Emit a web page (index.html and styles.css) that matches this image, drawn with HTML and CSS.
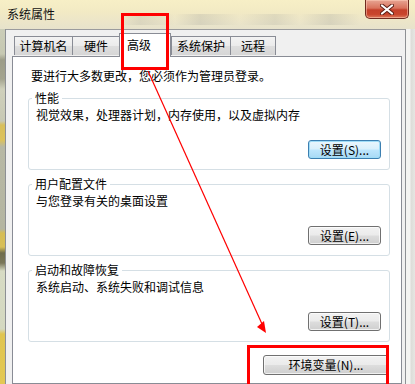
FILE: index.html
```html
<!DOCTYPE html>
<html lang="zh-CN">
<head>
<meta charset="utf-8">
<title>系统属性</title>
<link rel="stylesheet" href="styles.css">
</head>
<body>
<div class="window">
  <div class="titlebar">
    <span class="title">系统属性</span>
    <div class="close">
      <svg width="14" height="11" viewBox="0 0 14 11"><path d="M2 1.5 L12 9.5 M12 1.5 L2 9.5" stroke="#5a1d14" stroke-width="4" stroke-linecap="round"/><path d="M2 1.5 L12 9.5 M12 1.5 L2 9.5" stroke="#ffffff" stroke-width="2.2" stroke-linecap="round"/></svg>
    </div>
  </div>
  <div class="body">
    <div class="frame-left"></div>
    <div class="client">
      <div class="tabs">
        <div class="tab w1">计算机名</div>
        <div class="tab w2">硬件</div>
        <div class="tab selected">高级</div>
        <div class="tab w4">系统保护</div>
        <div class="tab w5">远程</div>
      </div>
      <div class="panel">
        <p class="intro">要进行大多数更改，您必须作为管理员登录。</p>
        <fieldset class="group">
          <legend>性能</legend>
          <p class="desc">视觉效果，处理器计划，内存使用，以及虚拟内存</p>
          <div class="actions"><button class="btn focused">设置(S)...</button></div>
        </fieldset>
        <fieldset class="group">
          <legend>用户配置文件</legend>
          <p class="desc">与您登录有关的桌面设置</p>
          <div class="actions"><button class="btn">设置(E)...</button></div>
        </fieldset>
        <fieldset class="group">
          <legend>启动和故障恢复</legend>
          <p class="desc">系统启动、系统失败和调试信息</p>
          <div class="actions"><button class="btn">设置(T)...</button></div>
        </fieldset>
        <div class="env-row"><button class="btn env">环境变量(N)...</button></div>
      </div>
    </div>
    <div class="frame-right"></div>
  </div>
  <svg class="annot" width="415" height="384" viewBox="0 0 415 384">
    <rect x="122.5" y="14.5" width="45" height="54" fill="none" stroke="#ff0000" stroke-width="3"/>
    <line x1="148" y1="71" x2="262" y2="324" stroke="#ff0000" stroke-width="1.2"/>
    <polygon points="257,327 264,321 266,333" fill="#ff0000"/>
    <rect x="248.5" y="346.5" width="139" height="60" fill="none" stroke="#ff0000" stroke-width="3"/>
  </svg>
</div>
</body>
</html>
```
FILE: styles.css
```css
* { box-sizing: border-box; }
html, body { margin: 0; padding: 0; }
body {
  width: 415px;
  height: 384px;
  overflow: hidden;
  font-family: "Noto Sans CJK SC", "Liberation Sans", sans-serif;
  font-size: 12px;
  color: #000;
}
.window {
  position: relative;
  width: 415px;
  height: 384px;
  overflow: hidden;
  display: flex;
  flex-direction: column;
  background: #e9e3c9;
}
.titlebar {
  height: 29px;
  flex: none;
  display: flex;
  justify-content: space-between;
  align-items: flex-start;
  background:
    linear-gradient(90deg, rgba(255,255,255,0) 0, rgba(255,255,255,0) 120px, rgba(170,170,160,0.25) 140px, rgba(255,255,255,0) 175px, rgba(170,170,160,0.3) 200px, rgba(255,255,255,0) 240px, rgba(170,170,160,0.25) 275px, rgba(255,255,255,0) 300px, rgba(170,170,160,0.3) 330px, rgba(255,255,255,0) 360px) 0 14px / 100% 11px no-repeat,
    linear-gradient(180deg, #f7efc6 0, #f2eac4 40%, #e7e2cc 100%);
}
.title {
  padding: 6px 0 0 7px;
  line-height: 16px;
  font-size: 12px;
  color: #111;
}
.close {
  width: 44px;
  height: 19px;
  margin-right: 6px;
  border: 1px solid #6f2a1f;
  border-top: none;
  border-radius: 0 0 5px 5px;
  background: linear-gradient(180deg, #e7a593 0, #d9735d 45%, #c4402a 55%, #c9452c 80%, #dc7a5c 100%);
  box-shadow: inset 0 0 0 1px rgba(255,210,190,0.5);
  display: flex;
  align-items: center;
  justify-content: center;
}
.body {
  flex: 1;
  display: flex;
  min-height: 0;
}
.frame-left {
  width: 6px;
  flex: none;
  background: linear-gradient(180deg,
    #cbcdb8 0, #c6c8b2 25px, #9c9c88 31px, #a4a48f 50px, #cfd0bb 60px,
    #c8c9b4 92px, #d8bf5a 96px, #dcc25c 111px, #b7b8a4 118px,
    #b4b5a1 200px, #d6bd55 204px, #d8bf58 218px, #6f6c4c 224px, #7a775a 234px,
    #d7dbc4 242px, #d4d8c0 300px, #e0c550 305px, #e3c853 355px);
  border-right: 1px solid #8d9094;
}
.client {
  width: 400px;
  flex: none;
  background: #f0f0f0;
  border-top: 1px solid #9a9b9d;
  border-right: 1px solid #8d9094;
  padding: 3px 3px 0 6px;
  display: flex;
  flex-direction: column;
}
.frame-right {
  flex: 1;
  background: linear-gradient(90deg, #f4f4f2 0, #f4f4f2 4px, #dcdcd8 5px, #e6e6e2 100%);
}
.tabs {
  height: 23px;
  flex: none;
  display: flex;
  align-items: flex-end;
  padding-left: 2px;
  position: relative;
  z-index: 1;
}
.tab {
  height: 19px;
  margin-bottom: 1px;
  border: 1px solid #898c95;
  border-bottom: none;
  border-right: none;
  background: linear-gradient(180deg, #f3f3f3 0, #ebebeb 50%, #dedede 51%, #d6d6d6 100%);
  display: flex;
  align-items: center;
  justify-content: center;
  line-height: 14px;
  white-space: nowrap;
}
.tab.w5 { border-right: 1px solid #898c95; }
.w1 { width: 58px; }
.w2 { width: 48px; border-right: 1px solid #898c95; }
.w4 { width: 59px; }
.w5 { width: 46px; }
.tab.selected {
  width: 52px;
  height: 24px;
  margin: 0 0 -1px -1px;
  background: #fff;
  border: 1px solid #898c95;
  border-bottom: none;
  padding-bottom: 2px;
  justify-content: flex-start;
  padding-left: 7px;
}
.panel {
  flex: 1;
  background: #fff;
  border: 1px solid #898c95;
  padding: 0 12px 0 0;
}
.intro {
  margin: 12px 0 0 18px;
  line-height: 14px;
}
.group {
  margin: 8px 0 7px 15px;
  width: 362px;
  border: 1px solid #d5dfe5;
  border-radius: 3px;
  padding: 0 8px 10px 7px;
  min-width: 0;
}
.group + .group { margin-top: 0; }
.group legend {
  margin-left: -4px;
  padding: 0 3px;
  line-height: 14px;
}
.desc {
  margin: 3px 0 0 0;
  line-height: 14px;
}
.actions {
  margin-top: 18px;
  display: flex;
  justify-content: flex-end;
}
.btn {
  width: 73px;
  height: 19px;
  padding: 0;
  font-family: "Noto Sans CJK SC", "Liberation Sans", sans-serif;
  font-size: 12px;
  line-height: 14px;
  color: #000;
  border: 1px solid #707070;
  border-radius: 3px;
  background: linear-gradient(180deg, #f2f2f2 0, #ebebeb 48%, #dddddd 52%, #cfcfcf 100%);
  box-shadow: inset 0 0 0 1px rgba(255,255,255,0.7);
  white-space: nowrap;
}
.btn.focused {
  border-color: #3c7fb1;
  background: linear-gradient(180deg, #eaf6fd 0, #d9f0fc 48%, #bee6fd 52%, #a7d9f5 100%);
  box-shadow: inset 0 0 0 1px #9fdcf7;
}
.env-row {
  margin-top: 13px;
  display: flex;
  justify-content: flex-end;
}
.btn.env {
  width: 126px;
  height: 20px;
}
.annot {
  position: absolute;
  left: 0;
  top: 0;
  pointer-events: none;
  z-index: 5;
}
```
